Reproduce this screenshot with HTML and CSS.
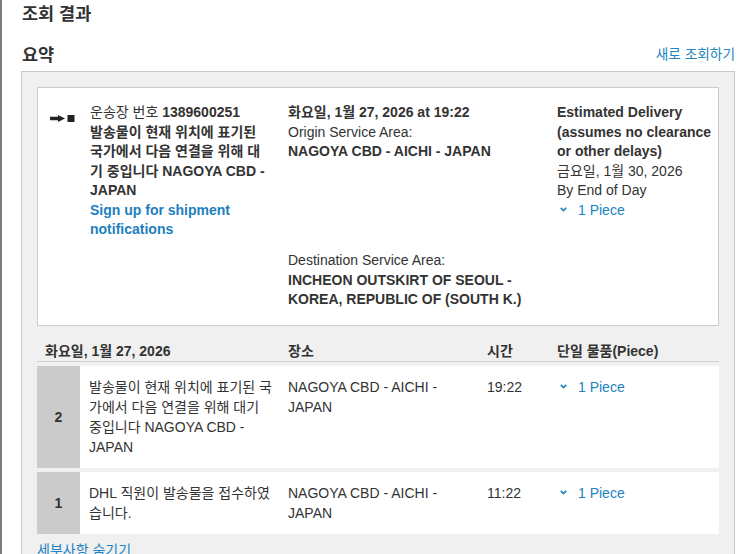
FILE: index.html
```html
<!DOCTYPE html>
<html lang="ko">
<head>
<meta charset="utf-8">
<title>조회 결과</title>
<link rel="stylesheet" href="styles.css">
</head>
<body>
<div class="page">
  <h1 class="title">조회 결과</h1>
  <div class="sec-head">
    <h2 class="sec-title">요약</h2>
    <a class="new-search">새로 조회하기</a>
  </div>
  <div class="panel">
    <div class="card">
      <div class="icon">
        <svg width="25" height="7" viewBox="0 0 25 7"><rect x="0" y="1.75" width="8.5" height="3.5" fill="#222"/><polygon points="8,0 15,3.5 8,7" fill="#222"/><rect x="17.5" y="0" width="7" height="7" fill="#222"/></svg>
      </div>
      <div class="c1">
        운송장 번호 <b>1389600251</b><br>
        <b>발송물이 현재 위치에 표기된 국가에서 다음 연결을 위해 대기 중입니다 NAGOYA CBD - JAPAN</b><br>
        <a class="link strong">Sign up for shipment notifications</a>
      </div>
      <div class="c2">
        <b>화요일, 1월 27, 2026 at 19:22</b><br>
        Origin Service Area:<br>
        <b>NAGOYA CBD - AICHI - JAPAN</b>
      </div>
      <div class="c3">
        <b>Estimated Delivery (assumes no clearance or other delays)</b><br>
        금요일, 1월 30, 2026<br>
        By End of Day<br>
        <a class="piece"><svg class="chev" width="7" height="5" viewBox="0 0 7 5"><path d="M0.8 0.8 L3.5 3.6 L6.2 0.8" fill="none" stroke="#2183c1" stroke-width="1.7"/></svg>1 Piece</a>
      </div>
      <div class="c2 dest">
        Destination Service Area:<br>
        <b>INCHEON OUTSKIRT OF SEOUL - KOREA, REPUBLIC OF (SOUTH K.)</b>
      </div>
    </div>

    <div class="events">
      <div class="ev-head">
        <div class="h-date">화요일, 1월 27, 2026</div>
        <div>장소</div>
        <div>시간</div>
        <div>단일 물품(Piece)</div>
      </div>
      <div class="ev-row">
        <div class="num">2</div>
        <div class="desc">발송물이 현재 위치에 표기된 국가에서 다음 연결을 위해 대기 중입니다 NAGOYA CBD - JAPAN</div>
        <div class="loc">NAGOYA CBD - AICHI - JAPAN</div>
        <div class="time">19:22</div>
        <div class="pc"><a class="piece"><svg class="chev" width="7" height="5" viewBox="0 0 7 5"><path d="M0.8 0.8 L3.5 3.6 L6.2 0.8" fill="none" stroke="#2183c1" stroke-width="1.7"/></svg>1 Piece</a></div>
      </div>
      <div class="ev-row">
        <div class="num">1</div>
        <div class="desc">DHL 직원이 발송물을 접수하였습니다.</div>
        <div class="loc">NAGOYA CBD - AICHI - JAPAN</div>
        <div class="time">11:22</div>
        <div class="pc"><a class="piece"><svg class="chev" width="7" height="5" viewBox="0 0 7 5"><path d="M0.8 0.8 L3.5 3.6 L6.2 0.8" fill="none" stroke="#2183c1" stroke-width="1.7"/></svg>1 Piece</a></div>
      </div>
    </div>
    <a class="hide-link">세부사항 숨기기</a>
  </div>
</div>
</body>
</html>
```

FILE: styles.css
```css
html, body {
  margin: 0;
  padding: 0;
  background: #fff;
}
body {
  font-family: "Liberation Sans", "Noto Sans CJK KR", sans-serif;
  font-size: 14px;
  color: #333;
  overflow: hidden;
}
.page {
  border-left: 2px solid #7d7d7d;
  min-height: 100vh;
  padding: 4px 20px 0 19px;
  box-sizing: border-box;
}
.title {
  margin: 0 0 21px 1px;
  font-size: 17.5px;
  line-height: 20px;
  font-weight: bold;
  color: #333;
}
.sec-head {
  display: flex;
  justify-content: space-between;
  align-items: center;
  height: 20px;
  margin-bottom: 6px;
}
.sec-title {
  margin: 0 0 0 1px;
  font-size: 17.5px;
  line-height: 20px;
  font-weight: bold;
  color: #333;
}
.new-search {
  font-size: 13.7px;
  line-height: 20px;
  color: #2183c1;
}
.panel {
  background: #f0f0f0;
  border: 1px solid #c9c9c9;
  padding: 15px 15px 30px;
}
.card {
  display: grid;
  grid-template-columns: 40px 198px 269px 1fr;
  row-gap: 11.5px;
  background: #fff;
  border: 1px solid #ccc;
  padding: 15px 2px 15px 12px;
  line-height: 19.5px;
}
.icon {
  padding-top: 12px;
  line-height: 0;
}
.c1, .c2 {
  padding-right: 18px;
}
.dest {
  grid-column: 3;
}
b {
  font-weight: bold;
}
.link {
  color: #1d7fbd;
}
.strong {
  font-weight: bold;
}
.piece {
  color: #2183c1;
  padding-left: 3px;
}
.chev {
  margin-right: 11px;
  vertical-align: 2.5px;
}
.events {
  margin-top: 10px;
  line-height: 20px;
}
.ev-head {
  display: grid;
  grid-template-columns: 251px 199px 70px 1fr;
  font-weight: bold;
  padding-top: 5px;
  border-bottom: 1px solid #cfcfcf;
}
.h-date {
  padding-left: 8px;
}
.ev-row {
  display: grid;
  grid-template-columns: 43px 208px 199px 70px 1fr;
  background: #fff;
  margin-top: 4px;
}
.ev-row > div {
  padding-top: 11px;
  padding-bottom: 11px;
}
.ev-row > .num {
  background: #cbcbcb;
  font-weight: bold;
  display: flex;
  align-items: center;
  justify-content: center;
}
.desc {
  padding-left: 9px;
  padding-right: 14px;
}
.loc {
  padding-right: 14px;
}
.hide-link {
  display: block;
  margin-top: 6px;
  font-size: 14px;
  line-height: 20px;
  color: #2183c1;
}
```
